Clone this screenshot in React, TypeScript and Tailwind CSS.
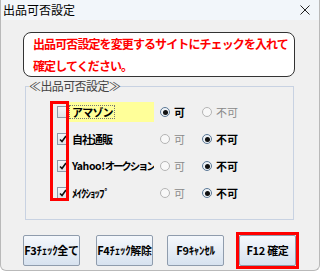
import { ReactNode } from "react";

type Site = {
  name: ReactNode;
  key: string;
  checked: boolean;
  allow: boolean;
  highlight?: boolean;
  tight?: boolean;
};

const sites: Site[] = [
  { key: "amazon", name: "アマゾン", checked: false, allow: true, highlight: true },
  { key: "self", name: "自社通販", checked: true, allow: false },
  {
    key: "yahoo",
    name: (
      <>
        <span className="tracking-[-0.4px]">Yahoo!</span>
        <span className="tracking-[-2.2px]">オークション</span>
      </>
    ),
    checked: true,
    allow: false,
    tight: true,
  },
  { key: "makeshop", name: "ﾒｲｸｼｮｯﾌﾟ", checked: true, allow: false },
];

function CheckBox({ checked }: { checked: boolean }) {
  return (
    <span className="flex items-center justify-center w-[12px] h-[12px] border border-[#8e99a8] bg-gradient-to-b from-[#f6f7f9] to-[#dfe3e8] shrink-0">
      {checked && (
        <svg width="8" height="8" viewBox="0 0 8 8">
          <path d="M1 4.5 L3 6.5 L7 1" stroke="#111" strokeWidth="1.6" fill="none" />
        </svg>
      )}
    </span>
  );
}

function Radio({ on, children }: { on: boolean; children: ReactNode }) {
  return (
    <span className="flex items-center gap-[4px]">
      <span
        className={
          on
            ? "flex items-center justify-center w-[10px] h-[10px] rounded-full border border-[#5b7896] bg-[#eef2f6]"
            : "flex items-center justify-center w-[10px] h-[10px] rounded-full border border-[#b4b4b4] bg-[#f8f8f8]"
        }
      >
        {on && <span className="w-[5px] h-[5px] rounded-full bg-[#111]" />}
      </span>
      <span className={on ? "text-[11px] font-bold text-black" : "text-[11px] text-[#8a8a8a]"}>{children}</span>
    </span>
  );
}

function Btn({ label }: { label: string }) {
  return (
    <button className="w-[57px] h-[31px] border border-[#8f9cad] rounded-[2px] bg-gradient-to-b from-[#f5f8fc] to-[#d7e2ef] text-[11px] font-bold text-black tracking-[-0.3px] whitespace-nowrap">
      {label}
    </button>
  );
}

function labelClass(s: Site) {
  if (s.highlight)
    return "pl-[2px] pr-[1px] border border-dotted border-[#777] text-[11px] leading-[12px] font-bold text-black tracking-[-0.8px] whitespace-nowrap";
  if (s.tight) return "pl-[3px] text-[10.5px] leading-[12px] font-bold text-black whitespace-nowrap";
  return "pl-[3px] text-[11px] leading-[12px] font-bold text-black tracking-[-1px] whitespace-nowrap";
}

export default function App() {
  return (
    <div className="w-[320px] h-[275px] bg-white font-['Noto_Sans_CJK_JP','Noto_Sans',sans-serif]">
      <div className="w-[320px] h-[271px] flex flex-col border border-t-0 border-[#b9b9b9] rounded-b-[6px] bg-[#f0f0f0] overflow-hidden">
        <div className="h-[20px] flex items-center justify-between pl-[2px] pr-[9px] bg-[#f2f6fa] shrink-0">
          <span className="text-[12px] leading-none text-black">出品可否設定</span>
          <svg width="10" height="10" viewBox="0 0 10 10">
            <path d="M0.5 0.5 L9.5 9.5 M9.5 0.5 L0.5 9.5" stroke="#222" strokeWidth="1" />
          </svg>
        </div>

        <div className="pl-[22px] pt-[12px]">
          <div className="w-[272px] h-[45px] border-[1.5px] border-[#333] rounded-[8px] bg-white pl-[9px] pt-[1px] text-[12px] font-bold text-[#ff0000] tracking-[-0.9px]">
            <div className="h-[19px] leading-[19px] whitespace-nowrap">出品可否設定を変更するサイトにチェックを入れて</div>
            <div className="leading-[25px]">確定してください。</div>
          </div>

          <fieldset className="mt-[2px] ml-[2px] w-[269px] border border-[#c8d2e2] pb-[16px]">
            <legend className="ml-[3px] text-[12px] leading-[14px] text-[#444] tracking-[-0.6px]">≪出品可否設定≫</legend>
            <div className="relative flex flex-col gap-[7px] pt-[9px]">
              {sites.map((s) => (
                <div key={s.key} className="flex items-center h-[20px]">
                  <span className="ml-[31px]">
                    <CheckBox checked={s.checked} />
                  </span>
                  <span
                    className={
                      s.highlight
                        ? "w-[85px] h-[20px] flex items-center bg-[#ffff99]"
                        : "w-[85px] h-[20px] flex items-center overflow-hidden"
                    }
                  >
                    <span className={labelClass(s)}>{s.name}</span>
                  </span>
                  <span className="ml-[6px] w-[42px]">
                    <Radio on={s.allow}>可</Radio>
                  </span>
                  <Radio on={!s.allow}>不可</Radio>
                </div>
              ))}
              <div className="absolute left-[24px] top-[8px] w-[19px] h-[100px] border-[3px] border-[#ff0000]" />
            </div>
          </fieldset>

          <div className="flex items-center mt-[12px]">
            <Btn label="F3ﾁｪｯｸ全て" />
            <div className="ml-[16px]">
              <Btn label="F4ﾁｪｯｸ解除" />
            </div>
            <div className="ml-[14px]">
              <Btn label="F9ｷｬﾝｾﾙ" />
            </div>
            <div className="ml-[12px] border-[3px] border-[#ff0000] p-0">
              <Btn label="F12 確定" />
            </div>
          </div>
        </div>
      </div>
    </div>
  );
}
